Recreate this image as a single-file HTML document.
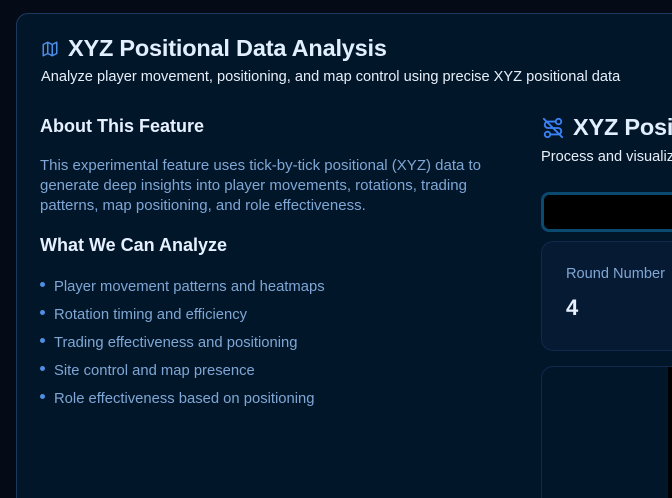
<!DOCTYPE html>
<html style="overflow:hidden"><head><style>
*{margin:0;padding:0;box-sizing:border-box}
html,body{width:672px;height:498px;overflow:hidden}
body{background:#050b16;font-family:"Liberation Sans",sans-serif}
#w{position:relative;width:672px;height:498px;overflow:hidden}
.card{position:absolute;left:16px;top:13px;width:656px;height:485px;background:#02162a;border:1px solid #1c3a5e;border-right:none;border-bottom:none;border-radius:12px 0 0 0}
.abs{position:absolute;white-space:nowrap}
h1{font-size:23.5px;font-weight:bold;color:#e2efff;letter-spacing:-0.2px}
.sub{font-size:14.6px;color:#e6eef8}
h2{font-size:18px;font-weight:bold;color:#e6f0ff}
.p{font-size:15px;color:#7fa6d4;line-height:20px}
li{list-style:none;font-size:14.8px;color:#7fa6d4;height:28px;position:relative;padding-left:14px}
li:before{content:"";position:absolute;left:0;top:3px;width:5px;height:5px;border-radius:50%;background:#4d8fe0}
</style></head><body><div id="w">
<div class="card"></div>
<svg class="abs" style="left:41px;top:40px" width="18" height="18" viewBox="0 0 24 24" fill="none" stroke="#4a8fe8" stroke-width="2" stroke-linejoin="round"><path d="M3 6l6-3 6 3 6-3v15l-6 3-6-3-6 3z M9 3v15 M15 6v15"/></svg>
<div class="abs" style="left:68px;top:35px"><h1>XYZ Positional Data Analysis</h1></div>
<div class="abs sub" style="left:41px;top:69px">Analyze player movement, positioning, and map control using precise XYZ positional data</div>
<div class="abs" style="left:40px;top:116px"><h2>About This Feature</h2></div>
<div class="abs p" style="left:40px;top:156px">This experimental feature uses tick-by-tick positional (XYZ) data to<br>generate deep insights into player movements, rotations, trading<br>patterns, map positioning, and role effectiveness.</div>
<div class="abs" style="left:40px;top:235px"><h2>What We Can Analyze</h2></div>
<ul class="abs" style="left:40px;top:279px">
<li>Player movement patterns and heatmaps</li>
<li>Rotation timing and efficiency</li>
<li>Trading effectiveness and positioning</li>
<li>Site control and map presence</li>
<li>Role effectiveness based on positioning</li>
</ul>
<svg class="abs" style="left:542px;top:117px" width="22" height="22" viewBox="0 0 24 24" fill="none" stroke="#3b82f6" stroke-width="2" stroke-linecap="round"><circle cx="6" cy="19" r="3"/><circle cx="18" cy="5" r="3"/><path d="M9 19h8.5a3.5 3.5 0 0 0 0-7h-11a3.5 3.5 0 0 1 0-7H15"/><path d="M2 2l20 20"/></svg>
<div class="abs" style="left:573px;top:114px"><h1>XYZ Positional</h1></div>
<div class="abs sub" style="left:541px;top:149px">Process and visualize</div>
<div class="abs" style="left:541px;top:192px;width:131px;height:40px;border:3px solid #0b4a70;border-right:none;border-radius:8px 0 0 8px;background:#000"></div>
<div class="abs" style="left:541px;top:241px;width:131px;height:110px;border:1px solid #0f2a4d;border-right:none;border-radius:12px 0 0 12px;background:#061a33"></div>
<div class="abs" style="left:566px;top:266px;font-size:14.6px;color:#7fa6d4">Round Number</div>
<div class="abs" style="left:566px;top:295px;font-size:22px;font-weight:bold;color:#e8f0ff">4</div>
<div class="abs" style="left:541px;top:366px;width:131px;height:132px;border:1px solid #0f2a4d;border-right:none;border-bottom:none;border-radius:12px 0 0 0;background:#021629"></div>
<div class="abs" style="left:668px;top:367px;width:4px;height:131px;background:#000"></div>
</div></body></html>
